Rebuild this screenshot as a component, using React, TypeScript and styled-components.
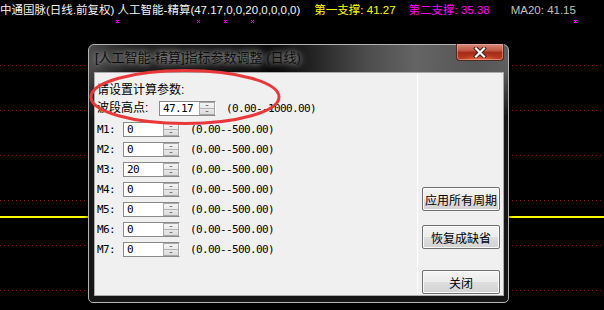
import React from "react";
import styled, { createGlobalStyle } from "styled-components";

const SANS = `"Liberation Sans", "Noto Sans CJK SC", sans-serif`;
const MONO = `"DejaVu Sans Mono", "Liberation Mono", "Noto Sans CJK SC", monospace`;

const GlobalStyle = createGlobalStyle`
  html, body {
    margin: 0;
    padding: 0;
    background: #000;
  }
  body {
    width: 604px;
    height: 310px;
    overflow: hidden;
  }
`;

const gridLines = [65, 110, 155, 200, 245, 290];
const markers = [117, 198, 225, 252, 575];

const params = [
  { name: "M1", value: "0" },
  { name: "M2", value: "0" },
  { name: "M3", value: "20" },
  { name: "M4", value: "0" },
  { name: "M5", value: "0" },
  { name: "M6", value: "0" },
  { name: "M7", value: "0" },
];

const Marker: React.FC<{ x: number; y: number }> = ({ x, y }) => (
  <g fill="#ff00ff">
    <rect x={x - 1} y={y - 1} width={1} height={1} />
    <rect x={x + 1} y={y - 1} width={1} height={1} />
    <rect x={x} y={y} width={1} height={1} />
    <rect x={x - 1} y={y + 1} width={1} height={1} />
    <rect x={x + 1} y={y + 1} width={1} height={1} />
  </g>
);

const Field: React.FC<{ value: string }> = ({ value }) => (
  <FieldBox>
    <FieldValue>{value}</FieldValue>
    <Spin>
      <SpinHalf>
        <ArrowUp />
      </SpinHalf>
      <SpinHalf>
        <ArrowDown />
      </SpinHalf>
    </Spin>
  </FieldBox>
);

const App: React.FC = () => {
  return (
    <Screen>
      <GlobalStyle />
      <ChartLayer width={604} height={310} shapeRendering="crispEdges">
        {gridLines.map((y) => (
          <line
            key={y}
            x1={0}
            x2={604}
            y1={y + 0.5}
            y2={y + 0.5}
            stroke="#a01010"
            strokeDasharray="1 3"
          />
        ))}
        <rect x={0} y={216} width={604} height={2} fill="#ffff00" />
        {markers.map((x) => (
          <Marker key={x} x={x} y={21} />
        ))}
      </ChartLayer>

      <Header>
        <HeaderText $color="#f4f4f4">
          中通国脉(日线.前复权) 人工智能-精算(47.17,0,0,20,0,0,0,0)
        </HeaderText>
        <HeaderText $color="#ffff00" $gap={14}>
          第一支撑: 41.27
        </HeaderText>
        <HeaderText $color="#ff00ff" $gap={13}>
          第二支撑: 35.38
        </HeaderText>
        <HeaderText $color="#c0c0c0" $gap={21}>
          MA20: 41.15
        </HeaderText>
      </Header>

      <Dialog>
        <TitleBar>
          <TitleText>[人工智能-精算]指标参数调整 (日线)</TitleText>
          <CloseButton>
            <svg width="14" height="11" viewBox="0 0 14 11">
              <path
                d="M3 1.5 L11 9.5 M11 1.5 L3 9.5"
                stroke="#3a1a14"
                strokeWidth="4"
                strokeLinecap="square"
              />
              <path
                d="M3 1.5 L11 9.5 M11 1.5 L3 9.5"
                stroke="#ffffff"
                strokeWidth="2.2"
                strokeLinecap="square"
              />
            </svg>
          </CloseButton>
        </TitleBar>

        <Client>
          <LeftPanel>
            <Intro>请设置计算参数:</Intro>
            <ParamRow $gap={3}>
              <RowLabel $width={62}>波段高点:</RowLabel>
              <Field value="47.17" />
              <Range>(0.00--1000.00)</Range>
            </ParamRow>
            {params.map((p, i) => (
              <ParamRow key={p.name} $gap={i === 0 ? 6 : 5}>
                <MonoLabel $width={26}>{p.name}:</MonoLabel>
                <Field value={p.value} />
                <Range>(0.00--500.00)</Range>
              </ParamRow>
            ))}
          </LeftPanel>
          <RightPanel>
            <ActionButton $gap={0}>应用所有周期</ActionButton>
            <ActionButton $gap={14}>恢复成缺省</ActionButton>
            <ActionButton $gap={21}>关闭</ActionButton>
          </RightPanel>
        </Client>
      </Dialog>

      <Annotation width={604} height={310}>
        <ellipse
          cx={185}
          cy={97}
          rx={94}
          ry={26.5}
          fill="none"
          stroke="#e8383a"
          strokeWidth={3}
        />
      </Annotation>
    </Screen>
  );
};

export default App;

const Screen = styled.div`
  position: relative;
  width: 604px;
  height: 310px;
  background: #000;
  overflow: hidden;
  font-family: ${SANS};
`;

const ChartLayer = styled.svg`
  position: absolute;
  left: 0;
  top: 0;
`;

const Annotation = styled.svg`
  position: absolute;
  left: 0;
  top: 0;
  pointer-events: none;
`;

const Header = styled.div`
  position: relative;
  display: flex;
  height: 18px;
  padding-top: 3px;
  font-size: 11.5px;
  line-height: 14px;
  white-space: nowrap;
`;

const HeaderText = styled.span<{ $color: string; $gap?: number }>`
  color: ${(p) => p.$color};
  margin-left: ${(p) => p.$gap ?? 0}px;
`;

const Dialog = styled.div`
  position: absolute;
  left: 88px;
  top: 44px;
  width: 421px;
  height: 259px;
  box-sizing: border-box;
  display: flex;
  flex-direction: column;
  border: 1px solid #b4b4b4;
  border-radius: 6px 6px 5px 5px;
  background:
    linear-gradient(180deg, rgba(22, 22, 22, 0) 0px, rgba(22, 22, 22, 0) 26px, rgba(22, 22, 22, 1) 72px),
    linear-gradient(90deg, #4a4a4a 0%, #1c1c1c 10%, #080808 45%, #4c4c4c 66%, #646464 78%, #565656 92%, #5e5e5e 100%);
  box-shadow: 0 0 5px rgba(0, 0, 0, 0.7);
`;

const TitleBar = styled.div`
  display: flex;
  align-items: flex-start;
  height: 27px;
  padding-left: 6px;
`;

const TitleText = styled.span`
  font-size: 13px;
  line-height: 25px;
  color: #0c0c0c;
  white-space: nowrap;
  text-shadow:
    0 0 5px rgba(255, 255, 255, 0.55),
    0 0 10px rgba(255, 255, 255, 0.45),
    0 0 14px rgba(255, 255, 255, 0.35);
`;

const CloseButton = styled.div`
  margin: -1px 4px 0 auto;
  width: 48px;
  height: 17px;
  box-sizing: border-box;
  display: flex;
  align-items: center;
  justify-content: center;
  border: 1px solid #4a2a24;
  border-top: none;
  border-radius: 0 0 4px 4px;
  background:
    radial-gradient(ellipse 18px 6px at 50% 100%, rgba(240, 110, 60, 0.9), rgba(240, 110, 60, 0) 100%),
    linear-gradient(180deg, #d58a7c 0%, #c45a46 40%, #a52e1a 52%, #b2361e 80%, #c8462a 100%);
  box-shadow: inset 0 0 0 1px rgba(255, 200, 180, 0.45);
`;

const Client = styled.div`
  flex: 1;
  display: flex;
  margin: 0 4px 6px 5px;
  border: 1px solid #aaaaaa;
  background: #f0f0f0;
`;

const LeftPanel = styled.div`
  width: 323px;
  box-sizing: border-box;
  display: flex;
  flex-direction: column;
  padding: 9px 0 0 2px;
  border-right: 1px solid #ffffff;
`;

const Intro = styled.div`
  height: 16px;
  font-size: 12px;
  line-height: 16px;
  color: #000;
`;

const ParamRow = styled.div<{ $gap: number }>`
  display: flex;
  align-items: center;
  height: 15px;
  margin-top: ${(p) => p.$gap}px;
`;

const RowLabel = styled.span<{ $width: number }>`
  width: ${(p) => p.$width}px;
  font-size: 12px;
  line-height: 15px;
  color: #000;
  white-space: nowrap;
`;

const MonoLabel = styled.span<{ $width: number }>`
  width: ${(p) => p.$width}px;
  font-family: ${MONO};
  font-size: 11px;
  letter-spacing: -0.62px;
  line-height: 15px;
  color: #000;
`;

const FieldBox = styled.div`
  display: flex;
  width: 57px;
  height: 15px;
  box-sizing: border-box;
  border: 1px solid #8a8a8a;
  border-right-color: #ffffff;
`;

const FieldValue = styled.div`
  width: 36px;
  padding-left: 3px;
  background: #fff;
  font-family: ${MONO};
  font-size: 11px;
  letter-spacing: -0.62px;
  line-height: 13px;
  color: #000;
`;

const Spin = styled.div`
  flex: 1;
  display: flex;
  flex-direction: column;
  border: 1px solid #a8a8a8;
  background: linear-gradient(180deg, #f4f4f4, #dcdcdc);
`;

const SpinHalf = styled.div`
  flex: 1;
  display: flex;
  align-items: center;
  justify-content: center;
  & + & {
    border-top: 1px solid #b4b4b4;
  }
`;

const ArrowUp = styled.div`
  width: 0;
  height: 0;
  border-left: 2px solid transparent;
  border-right: 2px solid transparent;
  border-bottom: 1px solid #505050;
`;

const ArrowDown = styled.div`
  width: 0;
  height: 0;
  border-left: 2px solid transparent;
  border-right: 2px solid transparent;
  border-top: 1px solid #505050;
`;

const Range = styled.span`
  margin-left: 10px;
  font-family: ${MONO};
  font-size: 11px;
  letter-spacing: -0.62px;
  line-height: 15px;
  color: #000;
  white-space: nowrap;
`;

const RightPanel = styled.div`
  flex: 1;
  display: flex;
  flex-direction: column;
  padding: 114px 0 0 4px;
`;

const ActionButton = styled.div<{ $gap: number }>`
  width: 78px;
  height: 24px;
  box-sizing: border-box;
  margin-top: ${(p) => p.$gap}px;
  display: flex;
  align-items: center;
  justify-content: center;
  border: 1px solid #707070;
  border-radius: 2px;
  background: linear-gradient(180deg, #f4f4f4 0%, #ececec 48%, #dedede 52%, #d2d2d2 100%);
  box-shadow: inset 0 0 0 1px #fbfbfb;
  font-size: 12px;
  color: #000;
  white-space: nowrap;
`;
